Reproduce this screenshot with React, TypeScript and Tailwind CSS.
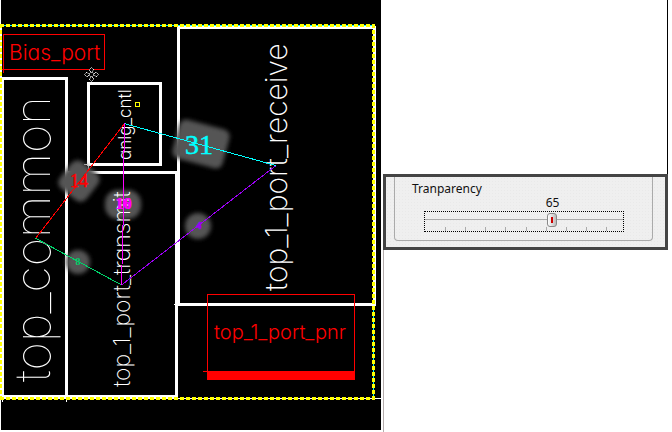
import { useState } from "react";

const LABEL = "font-[Inter,sans-serif] [font-feature-settings:'cv11']";
const COUNT = "font-['Liberation_Serif',serif]";

type Label = { text: string; x: number; y: number; style: string };

const verticalLabels: Label[] = [
  { text: "top_common", x: 50, y: 382, style: "text-[49px] font-thin" },
  { text: "top_1_port_transmit", x: 130, y: 387, style: "text-[23px] font-extralight" },
  { text: "top_1_port_receive", x: 287, y: 291, style: "text-[30px] font-extralight" },
  { text: "anlg_cntl", x: 131, y: 160, style: "text-[17px] font-light" },
];

function MoveCursor() {
  return (
    <g transform="translate(91.5 74.5)" fill="#000" stroke="#fff">
      {[0, 90, 180, 270].map((angle) => (
        <path
          key={angle}
          transform={`rotate(${angle})`}
          d="M0 -7 L2.5 -4.5 L1 -3.5 L1 -2 L-1 -2 L-1 -3.5 L-2.5 -4.5 Z"
          strokeWidth="1"
          strokeDasharray="1.4 .8"
        />
      ))}
    </g>
  );
}

function Floorplan() {
  return (
    <svg viewBox="0 0 381 430" className="block h-auto w-full" role="img" aria-label="Floorplan">
      <defs>
        <filter id="soft" x="-30%" y="-30%" width="160%" height="160%">
          <feGaussianBlur stdDeviation="2" />
        </filter>
      </defs>
      <rect x="1" y="0" width="380" height="430" fill="#000" />

      {/* blocks */}
      <g fill="none" stroke="#fff" strokeWidth="3" shapeRendering="crispEdges">
        <rect x="2.5" y="78.5" width="64" height="318" />
        <rect x="66.5" y="172.5" width="110" height="224" />
        <rect x="88.5" y="83.5" width="72" height="81" />
        <rect x="178.5" y="27.5" width="196" height="277" />
        <path d="M84 164.5H89M88.5 164V169M174 304.5H178M66.5 398V402M2.5 398V402M375 398.5H381" strokeWidth="1" />
      </g>

      {/* chip outline */}
      <g fill="none" shapeRendering="crispEdges">
        <path d="M0 25.5H374M373.5 306V398" stroke="#00ffff" strokeWidth="1" />
        <path d="M1.5 25V398M0 398.5H375" stroke="#fff" strokeWidth="1" />
        <path d="M0 25.5H375M0 398.5H375" stroke="#ff0" strokeWidth="3" strokeDasharray="4 2" />
        <path d="M.5 24V400M373.5 24V400" stroke="#ff0" strokeWidth="3" strokeDasharray="4 2" />
      </g>

      {/* red macros */}
      <g fill="none" stroke="#f00" shapeRendering="crispEdges">
        <path d="M3.5 73V34.5H104.5V69.5H2" />
        <rect x="207.5" y="294.5" width="147" height="80" />
        <path d="M203 371.5H208" />
        <rect x="207" y="371" width="148" height="9" fill="#f00" stroke="none" />
      </g>

      <g fill="#555" filter="url(#soft)">
        <rect x="175" y="124" width="52" height="40" rx="7" transform="rotate(15 201 144)" />
        <rect x="62" y="164" width="34" height="34" rx="8" transform="rotate(-52 79 181)" />
        <rect x="105" y="190" width="36" height="29" rx="13" />
        <circle cx="78" cy="262" r="12" />
        <circle cx="198" cy="226" r="13" />
      </g>

      <g fill="#fff">
        {verticalLabels.map((l) => (
          <text key={l.text} transform={`translate(${l.x} ${l.y}) rotate(-90)`} className={`${LABEL} ${l.style}`}>
            {l.text}
          </text>
        ))}
      </g>
      <g fill="#f00">
        <text x="9" y="60" className={`${LABEL} text-[21px] font-light`}>Bias_port</text>
        <text x="214" y="339" className={`${LABEL} text-[20px] font-light`}>top_1_port_pnr</text>
      </g>

      {/* connections */}
      <g fill="none" strokeWidth="1" shapeRendering="crispEdges">
        <path d="M124.5 123.5L35.5 238.5" stroke="#f00" />
        <path d="M35 238L121.5 285" stroke="#00d26a" />
        <path d="M276 165.5L121.5 285" stroke="#9b00f5" />
        <path d="M124 123.5L276 165.5" stroke="#00ffff" />
        <path d="M124.5 123V150L123.5 151V205L121.5 285" stroke="#f0f" />
      </g>

      <g className={COUNT} textAnchor="middle">
        <text x="199" y="154" fill="#00ffff" stroke="#00ffff" strokeWidth=".5" className="text-[28px]">31</text>
        <text x="79" y="187" fill="#f00" stroke="#f00" strokeWidth=".5" className="text-[18px]">14</text>
        <g fill="#f0f" className="text-[16px] font-bold">
          <text x="123" y="209">16</text>
          <text x="124" y="209">10</text>
        </g>
        <text x="78" y="265" fill="#00d26a" className="text-[10px] font-bold">8</text>
        <text x="199" y="229" fill="#9b00f5" stroke="#9b00f5" strokeWidth=".5" className="text-[10px] font-bold">4</text>
      </g>

      <rect x="135.5" y="102.5" width="4" height="4" fill="none" stroke="#ff0" shapeRendering="crispEdges" />
      <MoveCursor />
    </svg>
  );
}

function TransparencyPanel() {
  const [value, setValue] = useState(65);
  return (
    <section className="border-[3px] border-[#444] bg-[#efefef] bg-[radial-gradient(#e9e9e9_1px,transparent_1px)] bg-[size:3px_3px] px-2 pb-1.5 font-['Noto_Sans',sans-serif] text-[12px] leading-4 text-[#111]">
      <div className="mr-1 rounded-b-[4px] border border-t-0 border-[#aaa] pt-1 pr-7 pb-2 pl-[29px]">
        <label htmlFor="transparency" className="-ml-3 block">
          Tranparency
        </label>
        <div className="px-[5px]">
          <div className="relative h-[14px]">
            <output
              htmlFor="transparency"
              className="absolute -top-0.5 -translate-x-1/2"
              style={{ left: `${value}%` }}
            >
              {value}
            </output>
          </div>
        </div>
        <div className="border border-dotted border-black">
          <input
            id="transparency"
            type="range"
            min={0}
            max={100}
            value={value}
            onChange={(e) => setValue(Number(e.target.value))}
            className="block h-[15px] w-full appearance-none bg-transparent bg-[linear-gradient(#aaa,#aaa)] bg-[size:100%_1px] bg-center bg-no-repeat outline-none [&::-webkit-slider-thumb]:h-[14px] [&::-webkit-slider-thumb]:w-[10px] [&::-webkit-slider-thumb]:appearance-none [&::-webkit-slider-thumb]:rounded-[3px] [&::-webkit-slider-thumb]:border [&::-webkit-slider-thumb]:border-[#888] [&::-webkit-slider-thumb]:bg-[linear-gradient(#c00,#c00),linear-gradient(to_right,#fff,#bbb)] [&::-webkit-slider-thumb]:bg-[size:2px_6px,100%_100%] [&::-webkit-slider-thumb]:bg-center [&::-webkit-slider-thumb]:bg-no-repeat"
          />
          <div className="flex h-1 justify-between pr-4 pl-5" aria-hidden="true">
            {Array.from({ length: 9 }, (_, i) => (
              <span key={i} className="w-px bg-[#aaa]" />
            ))}
          </div>
        </div>
      </div>
    </section>
  );
}

export default function App() {
  return (
    <main className="grid min-h-screen grid-cols-[381fr_291fr] bg-white">
      <Floorplan />
      <aside className="flex flex-col pr-1 pl-0.5">
        <div className="h-[174px] border-r border-black" />
        <TransparencyPanel />
        <div className="flex-1 border-l border-[#b5adad]" />
      </aside>
    </main>
  );
}
